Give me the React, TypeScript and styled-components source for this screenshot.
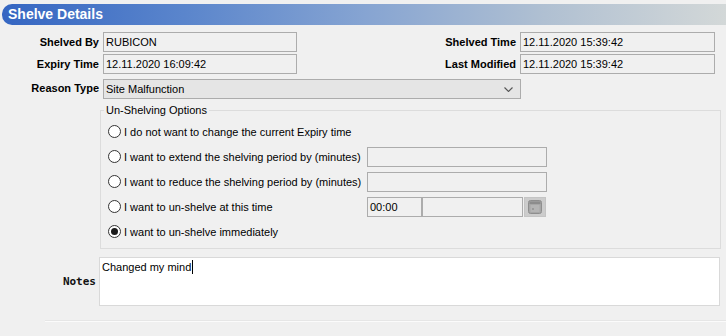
import React from 'react';
import styled, { createGlobalStyle } from 'styled-components';

const GlobalStyle = createGlobalStyle`
  html, body {
    margin: 0;
    padding: 0;
    background: #f0f0f0;
  }
  body {
    font-family: "Liberation Sans", Arial, sans-serif;
    font-size: 11px;
    color: #000;
  }
`;

const Page = styled.div`
  width: 726px;
  height: 336px;
  box-sizing: border-box;
  padding-top: 4px;
  background: #f0f0f0;
  overflow: hidden;
`;

const Header = styled.div`
  height: 21px;
  margin-left: 2px;
  padding-left: 6px;
  border-radius: 10px 0 0 10px;
  background: linear-gradient(to right, #3566c2 0%, #5a85cc 25%, #86a4d2 50%, #b0c0d2 75%, #d3d8d8 100%);
  color: #fff;
  font-size: 14px;
  font-weight: bold;
  line-height: 21px;
`;

const TopGrid = styled.div`
  display: grid;
  grid-template-columns: 99px 194px 215px 195px;
  grid-auto-rows: 20px;
  column-gap: 4px;
  row-gap: 2px;
  margin-top: 7px;
`;

const Label = styled.div<{ $offset?: number }>`
  align-self: center;
  margin-top: ${(p) => p.$offset ?? 0}px;
  text-align: right;
  font-weight: bold;
  white-space: nowrap;
`;

const Field = styled.div<{ $width?: number }>`
  box-sizing: border-box;
  height: 20px;
  width: ${(p) => (p.$width ? `${p.$width}px` : 'auto')};
  padding-left: 2px;
  border: 1px solid #acacac;
  background: #f0f0f0;
  line-height: 18px;
  white-space: nowrap;
  overflow: hidden;
`;

const SelectBox = styled.div`
  grid-column: 2 / span 3;
  justify-self: start;
  box-sizing: border-box;
  width: 418px;
  height: 20px;
  margin-top: 3px;
  padding: 0 7px 0 2px;
  display: flex;
  align-items: center;
  justify-content: space-between;
  border: 1px solid #acacac;
  background: #e5e5e5;
`;

const Fieldset = styled.fieldset`
  box-sizing: border-box;
  width: 621px;
  margin: 8px 0 0 100px;
  padding: 0 0 4px 0;
  border: 1px solid #dcdcdc;
  min-inline-size: 0;
`;

const Legend = styled.legend`
  margin-left: 3px;
  padding: 0 2px;
  line-height: 13px;
`;

const Options = styled.div`
  padding: 2px 0 0 7px;
`;

const RadioRow = styled.div`
  display: flex;
  align-items: center;
  height: 25px;
`;

const RadioLabel = styled.div`
  width: 259px;
  display: flex;
  align-items: center;
  gap: 3px;
  white-space: nowrap;
`;

const Radio = styled.span<{ $checked?: boolean }>`
  position: relative;
  box-sizing: border-box;
  width: 13px;
  height: 13px;
  border: 1px solid #333;
  border-radius: 50%;
  background: #fff;
  flex: none;

  &::after {
    content: '';
    display: ${(p) => (p.$checked ? 'block' : 'none')};
    position: absolute;
    left: 2px;
    top: 2px;
    width: 7px;
    height: 7px;
    border-radius: 50%;
    background: #1a1a1a;
  }
`;

const TimeGroup = styled.div`
  display: flex;
  align-items: center;
`;

const CalButton = styled.div`
  box-sizing: border-box;
  width: 22px;
  height: 20px;
  margin-left: 1px;
  display: flex;
  align-items: center;
  justify-content: center;
  border: 1px solid #c4c4c4;
  background: #cccccc;
`;

const NotesRow = styled.div`
  display: flex;
  align-items: center;
  gap: 3px;
  margin-top: 8px;
`;

const NotesLabel = styled.div`
  width: 96px;
  text-align: right;
  font-family: "DejaVu Sans Mono", "Liberation Mono", monospace;
  font-size: 11px;
  font-weight: bold;
  color: #111;
`;

const NotesArea = styled.div`
  box-sizing: border-box;
  width: 621px;
  height: 49px;
  padding: 2px 2px;
  border: 1px solid #d9d9d9;
  background: #fff;
  line-height: 14px;
`;

const Caret = styled.span`
  display: inline-block;
  width: 1px;
  height: 14px;
  margin-left: 1px;
  vertical-align: top;
  background: #000;
`;

const BottomRule = styled.div`
  margin: 15px 0 0 45px;
  border-top: 1px solid #fbfbfb;
  box-shadow: 0 -1px 0 #e6e6e6;
`;

const Chevron = () => (
  <svg width="9" height="5" viewBox="0 0 9 5">
    <path d="M0.5 0.5 L4.5 4.5 L8.5 0.5" fill="none" stroke="#555" strokeWidth="1.1" />
  </svg>
);

const CalendarIcon = () => (
  <svg width="14" height="14" viewBox="0 0 14 14">
    <rect x="0.5" y="0.5" width="13" height="13" rx="2" fill="#a6a6a6" stroke="#8e8e8e" />
    <rect x="1.5" y="1.5" width="11" height="2.5" fill="#8c8c8c" />
    <rect x="2.5" y="5" width="9" height="7" fill="#b4b4b4" />
    <rect x="4" y="8" width="2" height="2" fill="#9a9a9a" />
  </svg>
);

const options = [
  { text: 'I do not want to change the current Expiry time' },
  { text: 'I want to extend the shelving period by (minutes)', input: 'field' },
  { text: 'I want to reduce the shelving period by (minutes)', input: 'field' },
  { text: 'I want to un-shelve at this time', input: 'time' },
  { text: 'I want to un-shelve immediately', checked: true },
];

const App: React.FC = () => {
  return (
    <Page>
      <GlobalStyle />
      <Header>Shelve Details</Header>

      <TopGrid>
        <Label>Shelved By</Label>
        <Field>RUBICON</Field>
        <Label>Shelved Time</Label>
        <Field>12.11.2020 15:39:42</Field>

        <Label>Expiry Time</Label>
        <Field>12.11.2020 16:09:42</Field>
        <Label>Last Modified</Label>
        <Field>12.11.2020 15:39:42</Field>

        <Label $offset={3}>Reason Type</Label>
        <SelectBox>
          <span>Site Malfunction</span>
          <Chevron />
        </SelectBox>
      </TopGrid>

      <Fieldset>
        <Legend>Un-Shelving Options</Legend>
        <Options>
          {options.map((opt) => (
            <RadioRow key={opt.text}>
              <RadioLabel>
                <Radio $checked={opt.checked} />
                {opt.text}
              </RadioLabel>
              {opt.input === 'field' && <Field $width={180} />}
              {opt.input === 'time' && (
                <TimeGroup>
                  <Field $width={55}>00:00</Field>
                  <Field $width={101} />
                  <CalButton>
                    <CalendarIcon />
                  </CalButton>
                </TimeGroup>
              )}
            </RadioRow>
          ))}
        </Options>
      </Fieldset>

      <NotesRow>
        <NotesLabel>Notes</NotesLabel>
        <NotesArea>
          Changed my mind
          <Caret />
        </NotesArea>
      </NotesRow>

      <BottomRule />
    </Page>
  );
};

export default App;
